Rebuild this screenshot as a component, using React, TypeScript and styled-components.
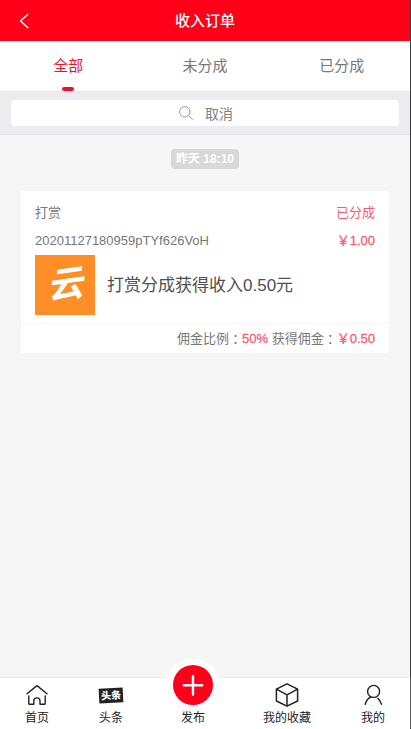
import React, { useState } from "react";
import styled, { createGlobalStyle } from "styled-components";

const GlobalStyle = createGlobalStyle`
  *, *::before, *::after { box-sizing: border-box; }
  body {
    margin: 0;
    background: #f6f6f6;
    font-family: "Liberation Sans", "Noto Sans CJK SC", sans-serif;
    color: #777;
  }
  button, input { font: inherit; color: inherit; padding: 0; border: 0; background: none; }
  a { color: inherit; text-decoration: none; }
  h1, h2, p { margin: 0; font-weight: 400; }
`;

const Page = styled.div`
  display: flex;
  flex-direction: column;
  min-height: 100vh;
  border-right: 1px solid #3c3c3e;
  background: #f6f6f6;
`;

const Header = styled.header`
  display: grid;
  grid-template-columns: 48px 1fr 48px;
  align-items: center;
  height: 41px;
  background: #ff0018;
  color: #fff;
`;

const BackButton = styled.button`
  display: flex;
  align-items: center;
  justify-content: center;
  height: 41px;
  cursor: pointer;
`;

const PageTitle = styled.h1`
  font-size: 15px;
  line-height: 20px;
  font-weight: 500;
  text-align: center;
`;

const Tabs = styled.nav`
  display: flex;
  height: 50px;
  background: #fff;
`;

const Tab = styled.button<{ $active: boolean }>`
  flex: 1;
  display: flex;
  flex-direction: column;
  align-items: center;
  justify-content: space-between;
  padding-top: 14px;
  font-size: 15px;
  line-height: 22px;
  color: ${(p) => (p.$active ? "#ea1228" : "#777")};
  cursor: pointer;

  &::after {
    content: "";
    width: 12px;
    height: 4px;
    border-radius: 2px;
    background: ${(p) => (p.$active ? "#ea1228" : "transparent")};
  }
`;

const SearchBar = styled.form`
  padding: 8px 11px;
  background: #ececf0;
  border-top: 1px solid #e7e7ea;
  border-bottom: 1px solid #e0e0e3;
`;

const SearchField = styled.label`
  display: flex;
  align-items: center;
  justify-content: center;
  gap: 12px;
  height: 26px;
  padding-left: 2px;
  border-radius: 4px;
  background: #fff;
  color: #999;
`;

const SearchInput = styled.input`
  field-sizing: content;
  min-width: 28px;
  font-size: 14px;
  line-height: 20px;
  outline: none;

  &::placeholder { color: #808080; opacity: 1; }
`;

const Content = styled.main`
  flex: 1;
  display: flex;
  flex-direction: column;
  padding: 14px 21px;
`;

const TimeBadge = styled.time`
  align-self: center;
  padding: 0 5px;
  border-radius: 4px;
  background: #d8d8d8;
  color: #fff;
  font-size: 12px;
  line-height: 20px;
  font-weight: 700;
`;

const Card = styled.article`
  margin-top: 22px;
  background: #fff;
  font-size: 13px;
  line-height: 20px;
`;

const CardRow = styled.div`
  display: flex;
  justify-content: space-between;
  padding: 0 14px;
  margin-bottom: 8px;
`;

const CardTop = styled.div`
  padding-top: 12px;
`;

const Accent = styled.span`
  color: #f65c70;
`;

const Amount = styled(Accent)`
  -webkit-text-stroke: 0.3px currentColor;
`;

const Product = styled.div`
  display: flex;
  align-items: center;
  gap: 12px;
  margin-top: -4px;
  padding: 0 14px 8px;
`;

const Logo = styled.div`
  display: flex;
  align-items: center;
  justify-content: center;
  flex: none;
  width: 60px;
  height: 60px;
  background: #ff8e27;
  color: #fff;
  font-size: 36px;
  line-height: 40px;
  font-weight: 700;
  font-style: italic;
`;

const LogoMark = styled.span`
  transform: rotate(-8deg);
`;

const ProductTitle = styled.h2`
  font-size: 17px;
  line-height: 24px;
  padding-top: 2px;
  color: #505050;
`;

const Summary = styled.p`
  padding: 5px 14px 4px;
  border-top: 1px solid #f5f5f5;
  text-align: right;
`;

const Colon = styled.span`
  display: inline-block;
  height: 20px;
  vertical-align: top;
  font-family: "Noto Sans CJK TC", sans-serif;
`;

const BottomNav = styled.nav`
  position: sticky;
  bottom: 0;
  display: flex;
  justify-content: space-around;
  height: 51px;
  background: #fff;
  box-shadow: 0 -1px 1px #efefef;
  color: #222;
`;

const NavItem = styled.a`
  display: flex;
  flex-direction: column;
  align-items: center;
  justify-content: flex-end;
  padding-bottom: 3px;
  font-size: 12px;
  line-height: 16px;
  white-space: nowrap;
`;

const NavIcon = styled.span`
  display: flex;
  align-items: center;
  justify-content: center;
  height: 30px;
`;

const NewsMark = styled.span`
  display: block;
  width: 24px;
  background: #222;
  color: #fff;
  font-size: 10px;
  line-height: 15px;
  font-weight: 900;
  text-align: center;
  transform: rotate(-3deg);
`;

const Publish = styled(NavItem)`
  position: relative;
  width: 40px;

  &::before {
    content: "";
    position: absolute;
    left: 50%;
    top: -19px;
    width: 56px;
    height: 56px;
    margin-left: -28px;
    border-radius: 50%;
    background: #fff;
  }
`;

const PublishCircle = styled.span`
  position: absolute;
  top: -13px;
  left: 0;
  display: flex;
  width: 40px;
  height: 40px;
  border-radius: 50%;
  background: #ff0018;
`;

const PublishLabel = styled.span`
  position: relative;
`;

const BackIcon = () => (
  <svg width="10" height="16" viewBox="0 0 10 16" fill="none" stroke="currentColor" strokeWidth="1.4" aria-hidden="true">
    <path d="M9.2 1 1.6 8l7.6 7" />
  </svg>
);

const SearchIcon = () => (
  <svg width="14" height="14" viewBox="0 0 14 14" fill="none" stroke="currentColor" strokeWidth="1" strokeLinecap="round" aria-hidden="true">
    <circle cx="5.8" cy="5.8" r="5.2" />
    <path d="M9.7 9.7 13.5 13.5" />
  </svg>
);

const HomeIcon = () => (
  <svg width="24" height="24" viewBox="0 0 24 24" fill="none" stroke="currentColor" strokeWidth="1.4" strokeLinecap="round" strokeLinejoin="round" aria-hidden="true">
    <path d="M2 10.8 12 2.6 22 10.8" />
    <path d="M3.8 13V20.4Q3.8 21.2 4.6 21.2H8.8V18A3.1 3.1 0 0 1 15 18V21.2H19.4Q20.2 21.2 20.2 20.4V13" />
  </svg>
);

const BoxIcon = () => (
  <svg width="24" height="24" viewBox="0 0 24 24" fill="none" stroke="currentColor" strokeWidth="1.5" strokeLinejoin="round" aria-hidden="true">
    <path d="M12 .8 22.6 6.2V18L12 23.2 1.4 18V6.2Z" />
    <path d="M1.4 6.2 12 11.8 22.6 6.2M12 11.8V23.2" />
  </svg>
);

const UserIcon = () => (
  <svg width="24" height="24" viewBox="0 0 24 24" fill="none" stroke="currentColor" strokeWidth="1.4" strokeLinecap="round" aria-hidden="true">
    <circle cx="12.6" cy="8.4" r="6" />
    <path d="M9.8 14Q5.6 15.8 4.2 21.2M16.8 15.4Q19.6 17.6 20.4 21.2" />
  </svg>
);

const PlusIcon = () => (
  <svg width="40" height="40" viewBox="0 0 40 40" stroke="#fff" strokeWidth="2.4" strokeLinecap="round" aria-hidden="true">
    <path d="M20 11V29.5M10.8 20.2H29.2" />
  </svg>
);

const tabs = ["全部", "未分成", "已分成"];

export default function App() {
  const [active, setActive] = useState(0);

  return (
    <>
      <GlobalStyle />
      <Page lang="zh-CN">
        <Header>
          <BackButton type="button" aria-label="返回">
            <BackIcon />
          </BackButton>
          <PageTitle>收入订单</PageTitle>
        </Header>
        <Tabs>
          {tabs.map((name, i) => (
            <Tab key={name} type="button" $active={i === active} onClick={() => setActive(i)}>
              {name}
            </Tab>
          ))}
        </Tabs>
        <SearchBar role="search" onSubmit={(e) => e.preventDefault()}>
          <SearchField>
            <SearchIcon />
            <SearchInput type="text" placeholder="取消" aria-label="搜索" />
          </SearchField>
        </SearchBar>
        <Content>
          <TimeBadge>昨天 18:10</TimeBadge>
          <Card>
            <CardTop>
              <CardRow>
                <span>打赏</span>
                <Accent>已分成</Accent>
              </CardRow>
              <CardRow>
                <span>20201127180959pTYf626VoH</span>
                <Amount>￥1.00</Amount>
              </CardRow>
            </CardTop>
            <Product>
              <Logo><LogoMark>云</LogoMark></Logo>
              <ProductTitle>打赏分成获得收入0.50元</ProductTitle>
            </Product>
            <Summary>
              佣金比例<Colon lang="zh-TW">：</Colon>
              <Amount>50%</Amount> 获得佣金<Colon lang="zh-TW">：</Colon>
              <Amount>￥0.50</Amount>
            </Summary>
          </Card>
        </Content>
        <BottomNav>
          <NavItem href="#home">
            <NavIcon><HomeIcon /></NavIcon>
            首页
          </NavItem>
          <NavItem href="#news">
            <NavIcon><NewsMark aria-hidden="true">头条</NewsMark></NavIcon>
            头条
          </NavItem>
          <Publish href="#publish">
            <PublishCircle><PlusIcon /></PublishCircle>
            <PublishLabel>发布</PublishLabel>
          </Publish>
          <NavItem href="#favorites">
            <NavIcon><BoxIcon /></NavIcon>
            我的收藏
          </NavItem>
          <NavItem href="#me">
            <NavIcon><UserIcon /></NavIcon>
            我的
          </NavItem>
        </BottomNav>
      </Page>
    </>
  );
}
